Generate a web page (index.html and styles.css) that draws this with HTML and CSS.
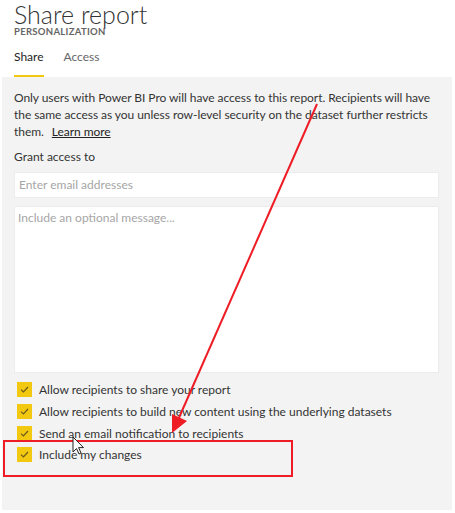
FILE: index.html
```html
<!DOCTYPE html>
<html>
<head>
<meta charset="utf-8">
<link rel="stylesheet" href="styles.css">
</head>
<body>
<div class="page">
  <header class="head">
    <h1 class="title">Share report</h1>
    <div class="subtitle">PERSONALIZATION</div>
    <nav class="tabs">
      <span class="tab active">Share</span>
      <span class="tab">Access</span>
    </nav>
  </header>
  <section class="panel">
    <p class="info">Only users with Power BI Pro will have access to this report. Recipients will have the same access as you unless row-level security on the dataset further restricts them. <a class="learn">Learn more</a></p>
    <div class="label">Grant access to</div>
    <div class="input">Enter email addresses</div>
    <div class="textarea">Include an optional message...</div>
    <ul class="checks">
      <li class="check"><span class="box"><svg viewBox="0 0 15 15" width="15" height="15"><path d="M4 7.6 L6.4 10 L11 5" fill="none" stroke="#6b5a1e" stroke-width="1.2"/></svg></span>Allow recipients to share your report</li>
      <li class="check"><span class="box"><svg viewBox="0 0 15 15" width="15" height="15"><path d="M4 7.6 L6.4 10 L11 5" fill="none" stroke="#6b5a1e" stroke-width="1.2"/></svg></span>Allow recipients to build new content using the underlying datasets</li>
      <li class="check"><span class="box"><svg viewBox="0 0 15 15" width="15" height="15"><path d="M4 7.6 L6.4 10 L11 5" fill="none" stroke="#6b5a1e" stroke-width="1.2"/></svg></span>Send an email notification to recipients</li>
      <li class="check"><span class="box"><svg viewBox="0 0 15 15" width="15" height="15"><path d="M4 7.6 L6.4 10 L11 5" fill="none" stroke="#6b5a1e" stroke-width="1.2"/></svg></span>Include my changes</li>
    </ul>
  </section>
  <svg class="annot" width="455" height="513" viewBox="0 0 455 513">
    <line x1="317" y1="104" x2="178" y2="420" stroke="#ee1c25" stroke-width="2"/>
    <polygon points="172,433 172,414 187,421" fill="#ee1c25"/>
    <rect x="4" y="441" width="288" height="35" fill="none" stroke="#ee1c25" stroke-width="2"/>
    <path d="M73 437 L73 452 L76.5 448.5 L79 454 L81 453 L78.6 447.6 L83.5 447.6 Z" fill="#fff" stroke="#222" stroke-width="1"/>
  </svg>
</div>
</body>
</html>
```
FILE: styles.css
```css
* { box-sizing: border-box; }
html, body { margin: 0; padding: 0; background: #fff; }
body { font-family: "Lato", "Open Sans", sans-serif; color: #252423; }
.page { position: relative; width: 455px; height: 513px; overflow: hidden; }
.head { padding: 1px 0 0 14px; }
.title { margin: 0; font-size: 25px; font-weight: 300; line-height: 26px; height: 26px; color: #333; }
.subtitle { margin-top: 0; font-size: 9.5px; font-weight: 700; color: #666; letter-spacing: 0.3px; line-height: 10px; }
.tabs { display: flex; gap: 20px; margin-top: 12px; }
.tab { font-size: 12px; line-height: 16px; padding-bottom: 10px; color: #666; border-bottom: 2px solid transparent; }
.tab.active { color: #252423; border-bottom-color: #f2c811; }
.panel { margin: 0 3px 3px 2px; height: 433px; background: #f3f3f3; padding: 12px 13px 0 12px; }
.info { margin: 0; font-size: 12px; line-height: 17px; color: #333; letter-spacing: -0.05px; }
.learn { margin-left: 5px; text-decoration: underline; color: #252423; }
.label { margin-top: 9px; font-size: 12px; line-height: 16px; color: #333; }
.input { margin-top: 7px; height: 26px; background: #fff; border: 1px solid #ececec; font-size: 12px; line-height: 24px; padding-left: 4px; color: #a6a6a6; }
.textarea { margin-top: 8px; height: 167px; background: #fff; border: 1px solid #ececec; font-size: 12px; line-height: 16px; padding: 3px 3px; color: #a6a6a6; }
.checks { list-style: none; margin: 6px 0 0 0; padding: 0; }
.check { display: flex; align-items: center; height: 21.7px; font-size: 12px; color: #333; }
.box { width: 15px; height: 15px; background: #f2c811; margin: 0 7px 0 3px; display: flex; }
.annot { position: absolute; left: 0; top: 0; pointer-events: none; }
```
